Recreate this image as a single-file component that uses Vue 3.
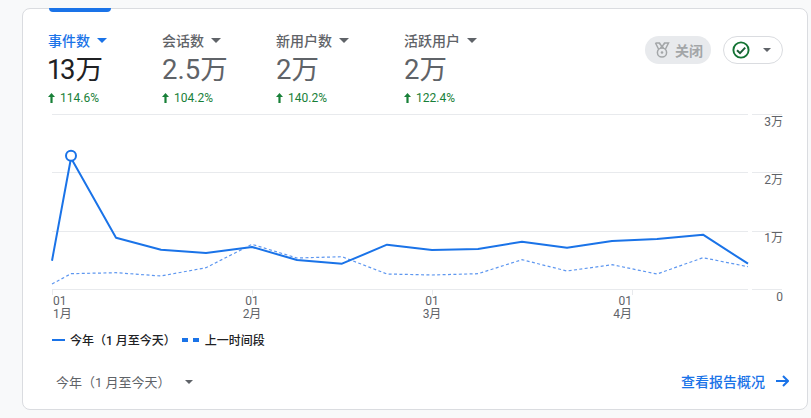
<template>
  <div class="page">
    <div class="card">
      <div class="tab-bar"></div>

      <div class="top">
        <div class="metrics">
          <div
            v-for="(m, i) in metrics"
            :key="m.label"
            class="metric"
            :class="{ active: i === 0 }"
            :style="{ width: m.width + 'px' }"
          >
            <div class="metric-label">
              <span>{{ m.label }}</span>
              <i class="caret"></i>
            </div>
            <div class="metric-value">{{ m.value }}</div>
            <div class="metric-delta">
              <svg width="7" height="10" viewBox="0 0 7 10">
                <path d="M3.5 0 L7 4 H4.6 V10 H2.4 V4 H0 Z" fill="#188038" />
              </svg>
              <span>{{ m.delta }}</span>
            </div>
          </div>
        </div>

        <div class="actions">
          <div class="pill-off">
            <svg width="16" height="16" viewBox="0 0 16 16" fill="none" stroke="#a3a6a8" stroke-width="1.5">
              <path d="M1.5 1 H5.5 L8 5 L10.5 1 H14.5 L11.5 7 M1.5 1 L4.5 7 M5 1 L9.5 6 M11 1 L6.5 6" />
              <circle cx="8" cy="10.5" r="4.6" />
              <circle cx="8" cy="10.5" r="1.3" fill="#a3a6a8" stroke="none" />
            </svg>
            <span>关闭</span>
          </div>
          <div class="pill-check">
            <svg width="18" height="18" viewBox="0 0 18 18" fill="none">
              <circle cx="9" cy="9" r="7.6" stroke="#137333" stroke-width="1.9" />
              <path d="M5 9.2 L8 12.1 L13.2 6.6" stroke="#1a5c34" stroke-width="1.9" />
            </svg>
            <i class="caret"></i>
          </div>
        </div>
      </div>

      <svg class="chart" width="784" height="226" viewBox="23 100 784 226">
        <g stroke="#e8eaed" stroke-width="1">
          <template v-for="y in gridYs" :key="y">
            <line x1="52" x2="748" :y1="y" :y2="y" />
            <line x1="752" x2="782" :y1="y" :y2="y" />
          </template>
          <line v-for="t in ticks" :key="t.x" :x1="t.x" :x2="t.x" y1="289.5" y2="295" />
        </g>

        <polyline :points="prevPoints" fill="none" stroke="#5e97f0" stroke-width="1.2" stroke-dasharray="3 2.4" />
        <polyline :points="curPoints" fill="none" stroke="#1a73e8" stroke-width="2" stroke-linejoin="round" />
        <circle cx="71" cy="155.8" r="5" fill="#fff" stroke="#1a73e8" stroke-width="2" />

        <g class="axis-text">
          <text v-for="l in yLabels" :key="l.text" x="783" :y="l.y" text-anchor="end">{{ l.text }}</text>
          <template v-for="t in ticks" :key="t.month">
            <text :x="t.lx" y="305" :text-anchor="t.anchor">01</text>
            <text :x="t.lx" y="318" :text-anchor="t.anchor">{{ t.month }}</text>
          </template>
        </g>
      </svg>

      <div class="legend">
        <div class="legend-item">
          <i class="swatch"></i>
          <span>今年（1 月至今天）</span>
        </div>
        <div class="legend-item">
          <i class="swatch dashed"><b></b><b></b></i>
          <span>上一时间段</span>
        </div>
      </div>

      <div class="footer">
        <div class="range">
          <span>今年（1 月至今天）</span>
          <i class="caret"></i>
        </div>
        <div class="link">
          <span>查看报告概况</span>
          <svg width="13" height="12" viewBox="0 0 13 12" fill="none" stroke="#1a73e8" stroke-width="2">
            <path d="M0 6 H11.5 M7 1 L12 6 L7 11" />
          </svg>
        </div>
      </div>
    </div>
  </div>
</template>

<script setup>
const metrics = [
  { label: '事件数', value: '13万', delta: '114.6%', width: 114 },
  { label: '会话数', value: '2.5万', delta: '104.2%', width: 114 },
  { label: '新用户数', value: '2万', delta: '140.2%', width: 128 },
  { label: '活跃用户', value: '2万', delta: '122.4%', width: 114 }
];

const gridYs = [114.5, 172.5, 231.5, 289.5];

const yLabels = [
  { text: '3万', y: 126 },
  { text: '2万', y: 184 },
  { text: '1万', y: 242 },
  { text: '0', y: 301 }
];

const ticks = [
  { x: 52.5, lx: 53, anchor: 'start', month: '1月' },
  { x: 252.5, lx: 252, anchor: 'middle', month: '2月' },
  { x: 432.5, lx: 432, anchor: 'middle', month: '3月' },
  { x: 632.5, lx: 632, anchor: 'end', month: '4月' }
];

const xs = [52, 71, 116, 161, 206, 252, 297, 342, 387, 432, 478, 522, 567, 612, 657, 703, 748];
const cur = [260.7, 158, 237.7, 249.7, 253, 247, 260, 263.7, 244.7, 250, 249, 241.7, 247.7, 241, 239, 234.7, 263.7];
const prev = [284, 273.7, 272.7, 276, 267.7, 244.3, 258, 256.7, 274, 275, 273.7, 259.7, 271, 264.7, 274, 257.7, 266.7];

const toPoints = (ys) => ys.map((y, i) => `${xs[i]},${y}`).join(' ');
const curPoints = toPoints(cur);
const prevPoints = toPoints(prev);
</script>

<style scoped>
.page {
  height: 418px;
  padding: 8px 0 0 22px;
  box-sizing: border-box;
  background: #f8f9fa;
  font-family: Roboto, "Noto Sans CJK SC", sans-serif;
  overflow: hidden;
}

.card {
  width: 786px;
  height: 402px;
  box-sizing: border-box;
  background: #fff;
  border: 1px solid #dadce0;
  border-radius: 8px;
}

.tab-bar {
  width: 62px;
  height: 4px;
  margin-left: 26px;
  margin-top: -1px;
  background: #1a73e8;
  border-radius: 0 0 4px 4px;
}

.top {
  display: flex;
  justify-content: space-between;
  padding: 16px 24px 0 25px;
  height: 88px;
  box-sizing: border-box;
}

.metrics {
  display: flex;
}

.metric-label {
  display: flex;
  align-items: center;
  gap: 7px;
  height: 24px;
  font-size: 14px;
  font-weight: 500;
  color: #5f6368;
}

.metric-label .caret {
  margin-top: 1px;
}

.metric-value {
  font-size: 27.5px;
  font-feature-settings: "pnum";
  line-height: 34px;
  color: #5f6368;
  margin-top: 1px;
}

.metric-delta {
  display: flex;
  align-items: center;
  gap: 5px;
  margin-top: 4px;
  font-size: 12px;
  line-height: 14px;
  color: #188038;
}

.active .metric-label {
  color: #1a73e8;
}

.active .caret {
  border-top-color: #1a73e8;
}

.active .metric-value {
  color: #202124;
}

.caret {
  display: inline-block;
  width: 0;
  height: 0;
  border-left: 5px solid transparent;
  border-right: 5px solid transparent;
  border-top: 5px solid #5f6368;
}

.actions {
  display: flex;
  gap: 12px;
  height: 28px;
  margin-top: 8px;
}

.pill-off {
  display: flex;
  align-items: center;
  gap: 5px;
  width: 66px;
  padding-left: 9px;
  box-sizing: border-box;
  background: #e8eaed;
  border-radius: 14px;
  font-size: 14px;
  font-weight: 700;
  color: #a3a6a8;
}

.pill-check {
  display: flex;
  align-items: center;
  width: 60px;
  padding-left: 8px;
  gap: 13px;
  box-sizing: border-box;
  border: 1px solid #dadce0;
  border-radius: 14px;
}

.pill-check .caret {
  border-left-width: 4px;
  border-right-width: 4px;
  border-top-width: 4px;
}

.chart {
  display: block;
}

.axis-text {
  font-size: 12px;
  fill: #5f6368;
}

.legend {
  display: flex;
  gap: 6px;
  margin: 5px 0 0 29px;
  font-size: 12px;
  font-weight: 500;
  color: #202124;
}

.legend-item {
  display: flex;
  align-items: center;
  gap: 5px;
}

.legend-item + .legend-item {
  gap: 6px;
}

.swatch {
  display: flex;
  justify-content: space-between;
  width: 13px;
  height: 2px;
  background: #1a73e8;
}

.swatch.dashed {
  width: 17px;
  height: 4px;
  background: none;
}

.swatch.dashed b {
  width: 6px;
  background: #1a73e8;
}

.footer {
  display: flex;
  justify-content: space-between;
  align-items: center;
  margin-top: 23px;
  padding: 0 18px 0 33px;
}

.range {
  display: flex;
  align-items: center;
  gap: 14px;
  font-size: 13px;
  color: #5f6368;
}

.range .caret {
  border-left-width: 4px;
  border-right-width: 4px;
  border-top-width: 4px;
  margin-top: 2px;
}

.link {
  display: flex;
  align-items: center;
  gap: 11px;
  font-size: 14px;
  font-weight: 500;
  color: #1a73e8;
}
</style>
